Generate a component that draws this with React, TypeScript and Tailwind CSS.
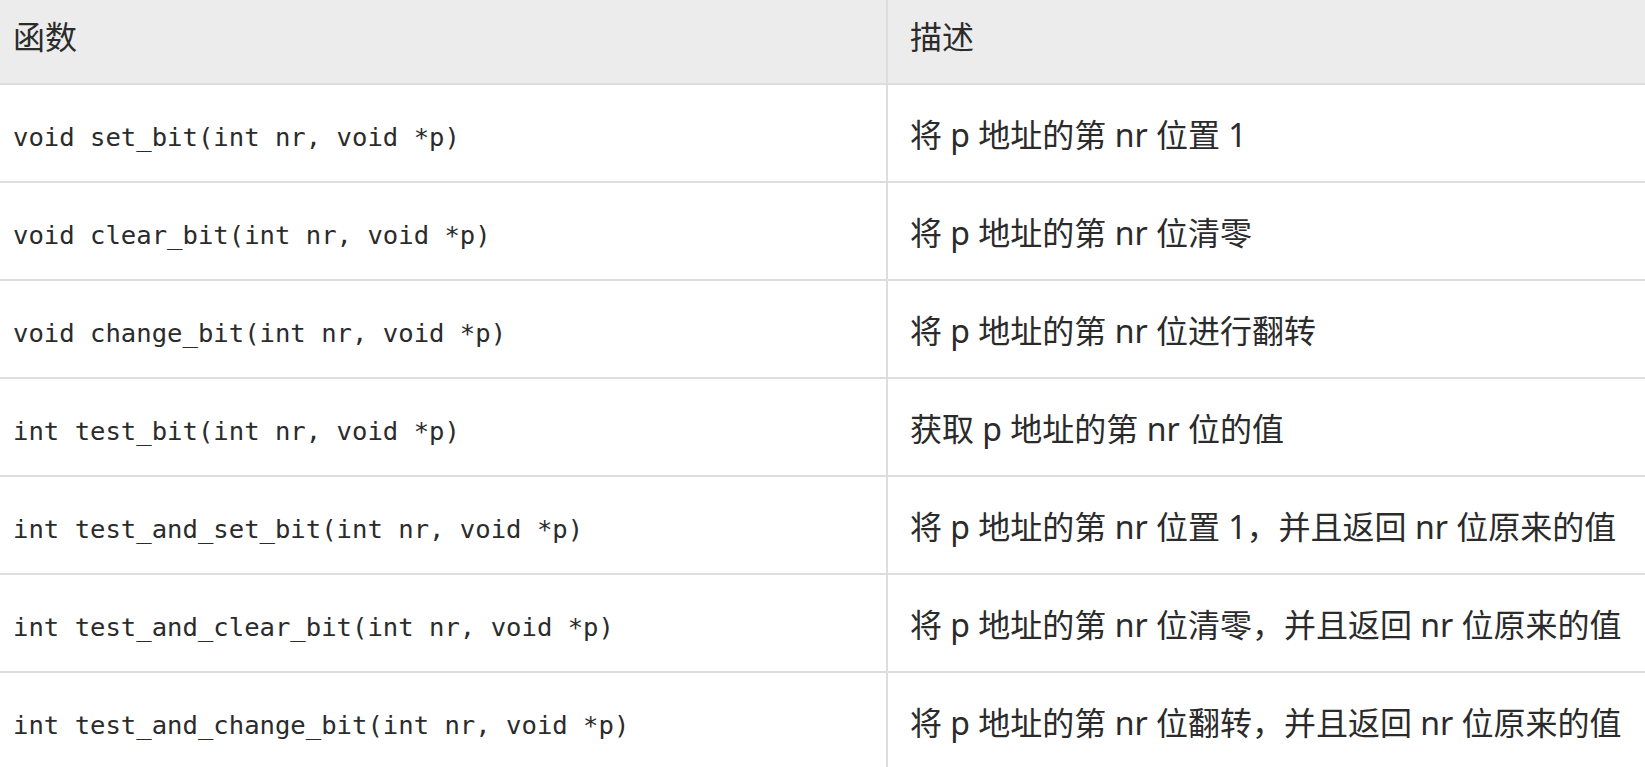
const rows = [
  { fn: 'void set_bit(int nr, void *p)', desc: '将 p 地址的第 nr 位置 1' },
  { fn: 'void clear_bit(int nr, void *p)', desc: '将 p 地址的第 nr 位清零' },
  { fn: 'void change_bit(int nr, void *p)', desc: '将 p 地址的第 nr 位进行翻转' },
  { fn: 'int test_bit(int nr, void *p)', desc: '获取 p 地址的第 nr 位的值' },
  { fn: 'int test_and_set_bit(int nr, void *p)', desc: '将 p 地址的第 nr 位置 1，并且返回 nr 位原来的值' },
  { fn: 'int test_and_clear_bit(int nr, void *p)', desc: '将 p 地址的第 nr 位清零，并且返回 nr 位原来的值' },
  { fn: 'int test_and_change_bit(int nr, void *p)', desc: '将 p 地址的第 nr 位翻转，并且返回 nr 位原来的值' },
];

const App = () => {
  return (
    <div className="min-h-screen bg-white text-[#2b2b2b] font-['Noto_Sans','Noto_Sans_CJK_SC',sans-serif] text-[32px] leading-[48px] overflow-hidden">
      <div className="grid grid-cols-[888px_1fr]">
        {/* header */}
        <div className="h-[85px] bg-[#ececec] border-b-2 border-r-2 border-[#dddddd] pl-[13px] pb-[9px] flex items-center">
          <span>函数</span>
        </div>
        <div className="h-[85px] bg-[#ececec] border-b-2 border-[#dddddd] pl-[22px] pb-[9px] flex items-center">
          <span>描述</span>
        </div>

        {rows.map((row) => (
          <div key={row.fn} className="contents">
            <div className="h-[98px] border-b-2 border-r-2 border-[#dddddd] pl-[13px] pt-[4px] flex items-center">
              <div>
                <code className="font-['DejaVu_Sans_Mono',monospace] text-[25.6px] whitespace-pre">{row.fn}</code>
              </div>
            </div>
            <div className="h-[98px] border-b-2 border-[#dddddd] pl-[22px] pt-[4px] flex items-center">
              <div className="whitespace-nowrap">{row.desc}</div>
            </div>
          </div>
        ))}
      </div>
    </div>
  );
};

export default App;
